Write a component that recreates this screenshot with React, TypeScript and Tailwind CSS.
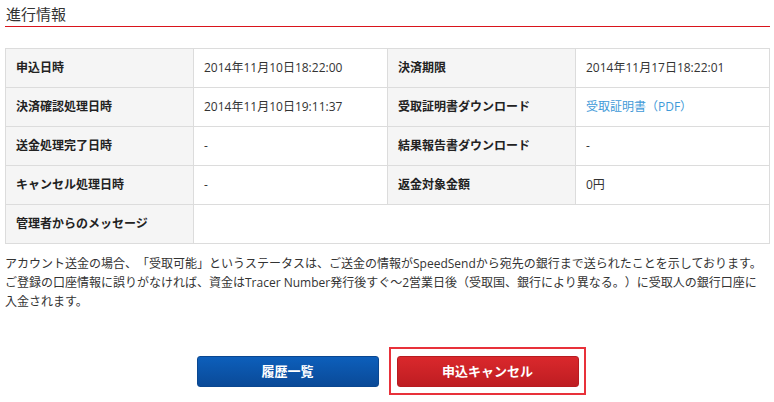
import React from "react";

const LABEL = "h-[39px] border-r border-b border-[#dcdcdc] bg-[#f5f5f5] flex items-center pl-[10px] font-bold text-[#222]";
const VALUE = "h-[39px] border-r border-b border-[#dcdcdc] bg-white flex items-center pl-[10px] text-[#333]";

export default function App() {
  return (
    <div className="w-[774px] h-[402px] bg-white font-['Open_Sans','Noto_Sans_CJK_JP',sans-serif] text-[12px] text-[#333] [text-spacing-trim:space-all]">
      <div className="ml-[5px] w-[765px]">
        <h2 className="pt-[4px] pb-[2px] pl-[1px] leading-[20px] text-[15px] font-normal text-[#333] border-b border-[#d9141c]">
          進行情報
        </h2>

        <div className="mt-[21px] grid grid-cols-[188px_194px_188px_194px] border-l border-t border-[#dcdcdc]">
          <div className={LABEL}>申込日時</div>
          <div className={VALUE}>2014年11月10日18:22:00</div>
          <div className={LABEL}>決済期限</div>
          <div className={VALUE}>2014年11月17日18:22:01</div>

          <div className={LABEL}>決済確認処理日時</div>
          <div className={VALUE}>2014年11月10日19:11:37</div>
          <div className={LABEL}>受取証明書ダウンロード</div>
          <div className={VALUE}>
            <a className="text-[#3f9ad8]">受取証明書（PDF）</a>
          </div>

          <div className={LABEL}>送金処理完了日時</div>
          <div className={VALUE}>-</div>
          <div className={LABEL}>結果報告書ダウンロード</div>
          <div className={VALUE}>-</div>

          <div className={LABEL}>キャンセル処理日時</div>
          <div className={VALUE}>-</div>
          <div className={LABEL}>返金対象金額</div>
          <div className={VALUE}>0円</div>

          <div className={LABEL}>管理者からのメッセージ</div>
          <div className={VALUE + " col-span-3"}></div>
        </div>

        <p className="mt-[10px] leading-[19px] whitespace-nowrap">
          アカウント送金の場合、「受取可能」というステータスは、ご送金の情報がSpeedSendから宛先の銀行まで送られたことを示しております。
          <br />
          ご登録の口座情報に誤りがなければ、資金はTracer Number発行後すぐ～2営業日後（受取国、銀行により異なる。）に受取人の銀行口座に
          <br />
          入金されます。
        </p>

        <div className="mt-[45px] flex items-start justify-center gap-[18px]">
          <button className="w-[182px] h-[31px] rounded-[3px] border border-[#0a4790] bg-gradient-to-b from-[#0d5fbb] to-[#0a4a98] text-white text-[13px] font-bold">
            履歴一覧
          </button>
          <div className="-mt-[9px] -mb-[8px] -ml-[8px] -mr-[7px] border-2 border-[#e8313a] pt-[7px] pb-[6px] pl-[6px] pr-[5px]">
            <button className="block w-[182px] h-[31px] rounded-[3px] border border-[#b81b20] bg-gradient-to-b from-[#da282c] to-[#be1d22] text-white text-[13px] font-bold">
              申込キャンセル
            </button>
          </div>
        </div>
      </div>
    </div>
  );
}
